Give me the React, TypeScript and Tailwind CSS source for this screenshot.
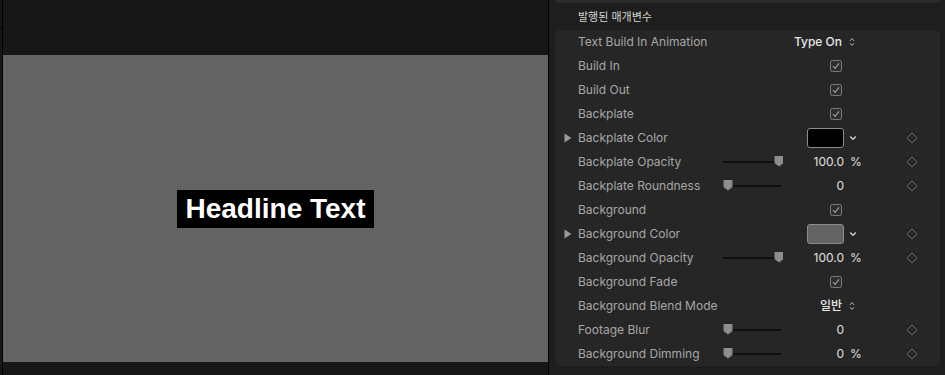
import React from "react";

type Row =
  | { label: string; kind: "popup"; value: string }
  | { label: string; kind: "check" }
  | { label: string; kind: "color"; color: string }
  | { label: string; kind: "slider"; pos: number; value: string; unit?: string };

const rows: Row[] = [
  { label: "Text Build In Animation", kind: "popup", value: "Type On" },
  { label: "Build In", kind: "check" },
  { label: "Build Out", kind: "check" },
  { label: "Backplate", kind: "check" },
  { label: "Backplate Color", kind: "color", color: "#000000" },
  { label: "Backplate Opacity", kind: "slider", pos: 1, value: "100.0", unit: "%" },
  { label: "Backplate Roundness", kind: "slider", pos: 0, value: "0" },
  { label: "Background", kind: "check" },
  { label: "Background Color", kind: "color", color: "#636363" },
  { label: "Background Opacity", kind: "slider", pos: 1, value: "100.0", unit: "%" },
  { label: "Background Fade", kind: "check" },
  { label: "Background Blend Mode", kind: "popup", value: "일반" },
  { label: "Footage Blur", kind: "slider", pos: 0, value: "0" },
  { label: "Background Dimming", kind: "slider", pos: 0, value: "0", unit: "%" },
];

function Diamond() {
  return (
    <svg width="12" height="12" viewBox="0 0 12 12">
      <path d="M6 1 L11 6 L6 11 L1 6 Z" fill="none" stroke="#666" strokeWidth="1" />
    </svg>
  );
}

function Checkbox() {
  return (
    <svg width="12" height="12" viewBox="0 0 12 12">
      <rect x="0.5" y="0.5" width="11" height="11" rx="2" fill="#2e2e2e" stroke="#7a7a7a" />
      <path d="M3 6.2 L5.1 8.4 L9 3.4" fill="none" stroke="#a0a0a0" strokeWidth="1.1" />
    </svg>
  );
}

function UpDown() {
  return (
    <svg width="6" height="10" viewBox="0 0 6 10">
      <path d="M1 3.8 L3 1.6 L5 3.8 M1 6.2 L3 8.4 L5 6.2" fill="none" stroke="#bdbdbd" strokeWidth="1" />
    </svg>
  );
}

function ChevronDown() {
  return (
    <svg width="8" height="6" viewBox="0 0 8 6">
      <path d="M1.2 1.5 L4 4.3 L6.8 1.5" fill="none" stroke="#cfcfcf" strokeWidth="1.4" />
    </svg>
  );
}

function Slider({ pos }: { pos: number }) {
  const x = 5 + pos * 51;
  return (
    <svg width="60" height="14" viewBox="0 0 60 14">
      <rect x="0" y="6" width="58" height="2" fill="#111" />
      <path
        d={`M${x - 4.5} 2 Q${x - 4.5} 1 ${x - 3.5} 1 L${x + 3.5} 1 Q${x + 4.5} 1 ${x + 4.5} 2 L${x + 4.5} 8 L${x} 11.5 L${x - 4.5} 8 Z`}
        fill="#8e8e8e"
      />
    </svg>
  );
}

function Triangle() {
  return (
    <svg width="8" height="10" viewBox="0 0 8 10">
      <path d="M0.5 0.5 L7.5 5 L0.5 9.5 Z" fill="#9a9a9a" />
    </svg>
  );
}

function ParamRow({ row }: { row: Row }) {
  return (
    <div className="flex h-6 items-center">
      <div className="flex w-[23px] justify-end pr-[6px]">{row.kind === "color" && <Triangle />}</div>
      <div className="w-[145px] text-[12px] text-[#a6a6a6]">{row.label}</div>
      <div className="flex w-[60px] items-center">{row.kind === "slider" && <Slider pos={row.pos} />}</div>
      <div className="flex w-[61px] items-center justify-end">
        {row.kind === "popup" && (
          <span className="mr-[2px] text-[12px] font-medium text-[#e6e6e6]">{row.value}</span>
        )}
        {row.kind === "check" && (
          <span className="mr-[2px] flex">
            <Checkbox />
          </span>
        )}
        {row.kind === "color" && (
          <span
            className="h-[20px] w-[37px] rounded-[3px] border border-[#8c8c8c]"
            style={{ backgroundColor: row.color }}
          />
        )}
        {row.kind === "slider" && <span className="text-[12px] text-[#e0e0e0]">{row.value}</span>}
      </div>
      <div className="flex w-[62px] items-center pl-[5px]">
        {row.kind === "popup" && <UpDown />}
        {row.kind === "color" && <ChevronDown />}
        {row.kind === "slider" && row.unit && (
          <span className="pl-[1px] text-[12px] text-[#e0e0e0]">{row.unit}</span>
        )}
      </div>
      <div className="flex w-[12px] items-center">
        {(row.kind === "color" || row.kind === "slider") && <Diamond />}
      </div>
    </div>
  );
}

export default function App() {
  return (
    <div
      className="flex h-[375px] w-[945px] overflow-hidden bg-[#1e1e1e]"
      style={{ fontFamily: "Inter, 'Noto Sans CJK KR', sans-serif" }}
    >
      {/* viewer */}
      <div className="flex w-[548px] bg-[#171717]">
        <div className="w-[2px]">
          <div className="mt-[27px] h-px w-[2px] bg-black" />
        </div>
        <div className="w-px bg-black" />
        <div className="flex flex-1 flex-col">
          <div className="h-[55px] bg-[#171717]" />
          <div className="flex flex-1 items-center justify-center bg-[#636363]">
            <div
              className="bg-black px-[9px] pb-[4px] pt-[4px] text-[28px] font-bold leading-[30px] text-white"
              style={{ fontFamily: "'Liberation Sans', Arial, sans-serif" }}
            >
              Headline Text
            </div>
          </div>
          <div className="h-[13px] bg-[#171717]" />
        </div>
      </div>
      <div className="w-px bg-black" />

      {/* inspector */}
      <div className="flex flex-1 flex-col">
        <div className="ml-[6px] mr-[5px] h-[3px] rounded-b-[3px] bg-[#2a2a2a]" />
        <div className="flex h-[27px] items-center pl-[29px] pt-[1px] text-[11px] text-[#d4d4d4]">
          발행된 매개변수
        </div>
        <div className="ml-[6px] mr-[5px] rounded-[5px] bg-[#262626]">
          {rows.map((r) => (
            <ParamRow key={r.label} row={r} />
          ))}
        </div>
      </div>
    </div>
  );
}
